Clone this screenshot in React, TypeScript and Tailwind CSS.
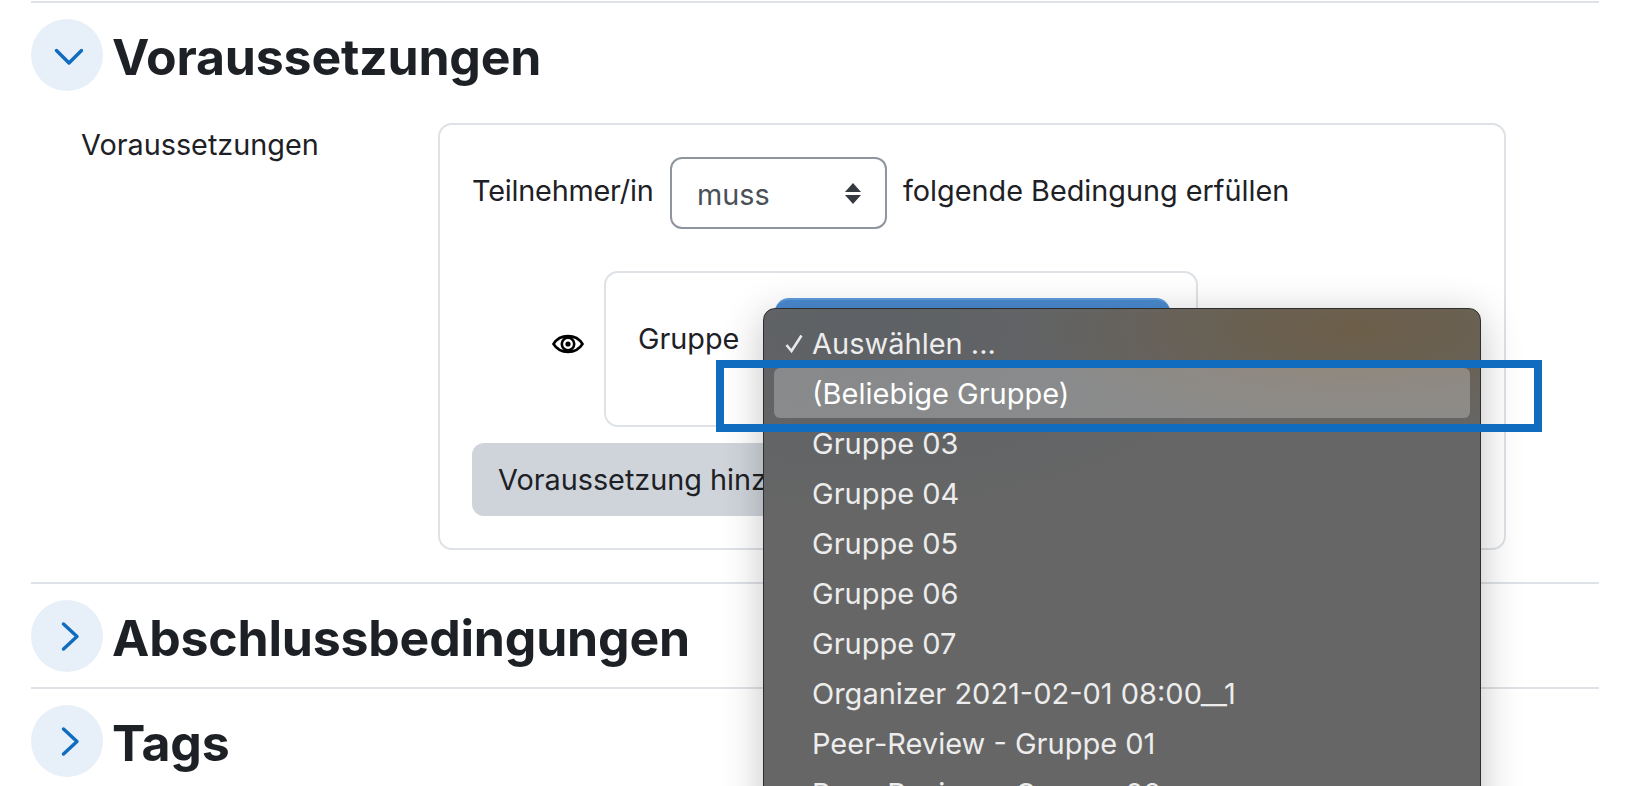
import React from "react";

const font = { fontFamily: "Inter, 'Noto Sans', sans-serif" };

function Chevron({ open }: { open?: boolean }) {
  return (
    <div className="w-[72px] h-[72px] rounded-full bg-[#e7eff8] flex items-center justify-center shrink-0">
      <svg width="32" height="32" viewBox="0 0 32 32" fill="none" stroke="#0f6cbf" strokeWidth="3.4" strokeLinecap="round" strokeLinejoin="round">
        {open ? <path d="M5.5 11.5 L18 24 L30.5 11.5" /> : <path d="M12.5 4 L26 16.5 L12.5 29" />}
      </svg>
    </div>
  );
}

function Section({ title, open }: { title: string; open?: boolean }) {
  return (
    <div className="flex items-center gap-[9px] h-[72px]">
      <Chevron open={open} />
      <h2 className="text-[50px] pt-[4px] font-bold leading-none text-[#1d2125] tracking-[-0.2px]">{title}</h2>
    </div>
  );
}

const items = [
  "Auswählen ...",
  "(Beliebige Gruppe)",
  "Gruppe 03",
  "Gruppe 04",
  "Gruppe 05",
  "Gruppe 06",
  "Gruppe 07",
  "Organizer 2021-02-01 08:00__1",
  "Peer-Review - Gruppe 01",
  "Peer-Review - Gruppe 02",
];

export default function App() {
  return (
    <div style={font} className="relative w-[1644px] h-[786px] overflow-hidden bg-white text-[#1d2125]">
      <div className="pl-[31px] pr-[45px] pt-[1px]">
        <div className="border-t-2 border-[#dee2e6]" />
        <div className="pt-[16px]"><Section title="Voraussetzungen" open /></div>
        <div className="flex pt-[32px]">
          <div className="w-[407px] pl-[50px] text-[28.8px] leading-[38px] mt-[3px]">Voraussetzungen</div>
          <div className="w-[1068px] h-[427px] border-2 border-[#dee2e6] rounded-[14px] pl-[32px] pt-[32px] text-[28.8px]">
            <div className="flex items-center h-[72px]">
              <span className="w-[198px] -mt-[4px] tracking-[-0.2px]">Teilnehmer/in</span>
              <div className="w-[217px] h-[72px] border-2 border-[#8f959e] rounded-[12px] flex items-center pl-[25px] pr-[24px] justify-between text-[#495057]">
                <span className="pt-[4px]">muss</span>
                <svg width="16" height="21" viewBox="0 0 16 21" fill="#343a40"><path d="M8 0 L16 9 H0 Z M8 21 L0 12 H16 Z" /></svg>
              </div>
              <span className="ml-[16px] -mt-[4px]">folgende Bedingung erfüllen</span>
            </div>
            <div className="flex items-center mt-[42px] ml-[80px]">
              <svg width="32" height="26" viewBox="0 0 32 26" fill="none" stroke="#000" strokeWidth="2.6" className="shrink-0 -mt-[10px]">
                <path d="M1.5 13 C8 2.5 24 2.5 30.5 13 C24 23.5 8 23.5 1.5 13 Z" />
                <circle cx="16" cy="13" r="6.2" />
                <circle cx="16" cy="13" r="2.6" fill="#000" stroke="none" />
              </svg>
              <div className="ml-[20px] w-[594px] h-[156px] border-2 border-[#dee2e6] rounded-[14px] pl-[32px] pt-[25px] flex">
                <span className="w-[137px] leading-[72px] mt-[5px] shrink-0">Gruppe</span>
                <div className="w-[395px] h-[72px] rounded-[14px] bg-[#4a8ad0] border-t-2 border-[#5f9bdd]" />
              </div>
            </div>
            <div className="mt-[16px] w-[380px] h-[73px] rounded-[12px] bg-[#ced4da] flex items-center pl-[26px] whitespace-nowrap">
              Voraussetzung hinzufügen
            </div>
          </div>
        </div>
        <div className="border-t-2 border-[#dee2e6] mt-[32px]" />
        <div className="pt-[16px]"><Section title="Abschlussbedingungen" /></div>
        <div className="border-t-2 border-[#dee2e6] mt-[15px]" />
        <div className="pt-[16px]"><Section title="Tags" /></div>
      </div>

      {/* native select popup */}
      <div className="absolute left-[763px] top-[308px] w-[718px] h-[520px] rounded-[12px] border border-[#2e2e2e] shadow-[0_8px_40px_rgba(0,0,0,0.24)] bg-[radial-gradient(330px_105px_at_590px_20px,#6c5e48_0%,rgba(108,94,72,0)_100%),radial-gradient(420px_200px_at_100px_20px,#5e6165_0%,rgba(94,97,101,0)_100%),linear-gradient(#666666,#666666)] px-[10px] pt-[9px] text-[29px] text-[#ededed]">
        {items.map((t, i) => (
          <div key={t} className={`h-[50px] flex items-center pl-[38px] pt-[2px] relative rounded-[6px] ${i === 1 ? "bg-white/25 text-white" : ""}`}>
            {i === 0 && (
              <svg width="18" height="19" viewBox="0 0 18 19" fill="none" stroke="#e8e8e8" strokeWidth="2.6" className="absolute left-[11px] top-[16px]">
                <path d="M1.5 11 L6.5 17 L16.5 1.5" />
              </svg>
            )}
            {t}
          </div>
        ))}
      </div>
      {/* annotation box */}
      <div className="absolute left-[716px] top-[360px] w-[826px] h-[72px] border-[8px] border-[#0f6cbf]" />
    </div>
  );
}
